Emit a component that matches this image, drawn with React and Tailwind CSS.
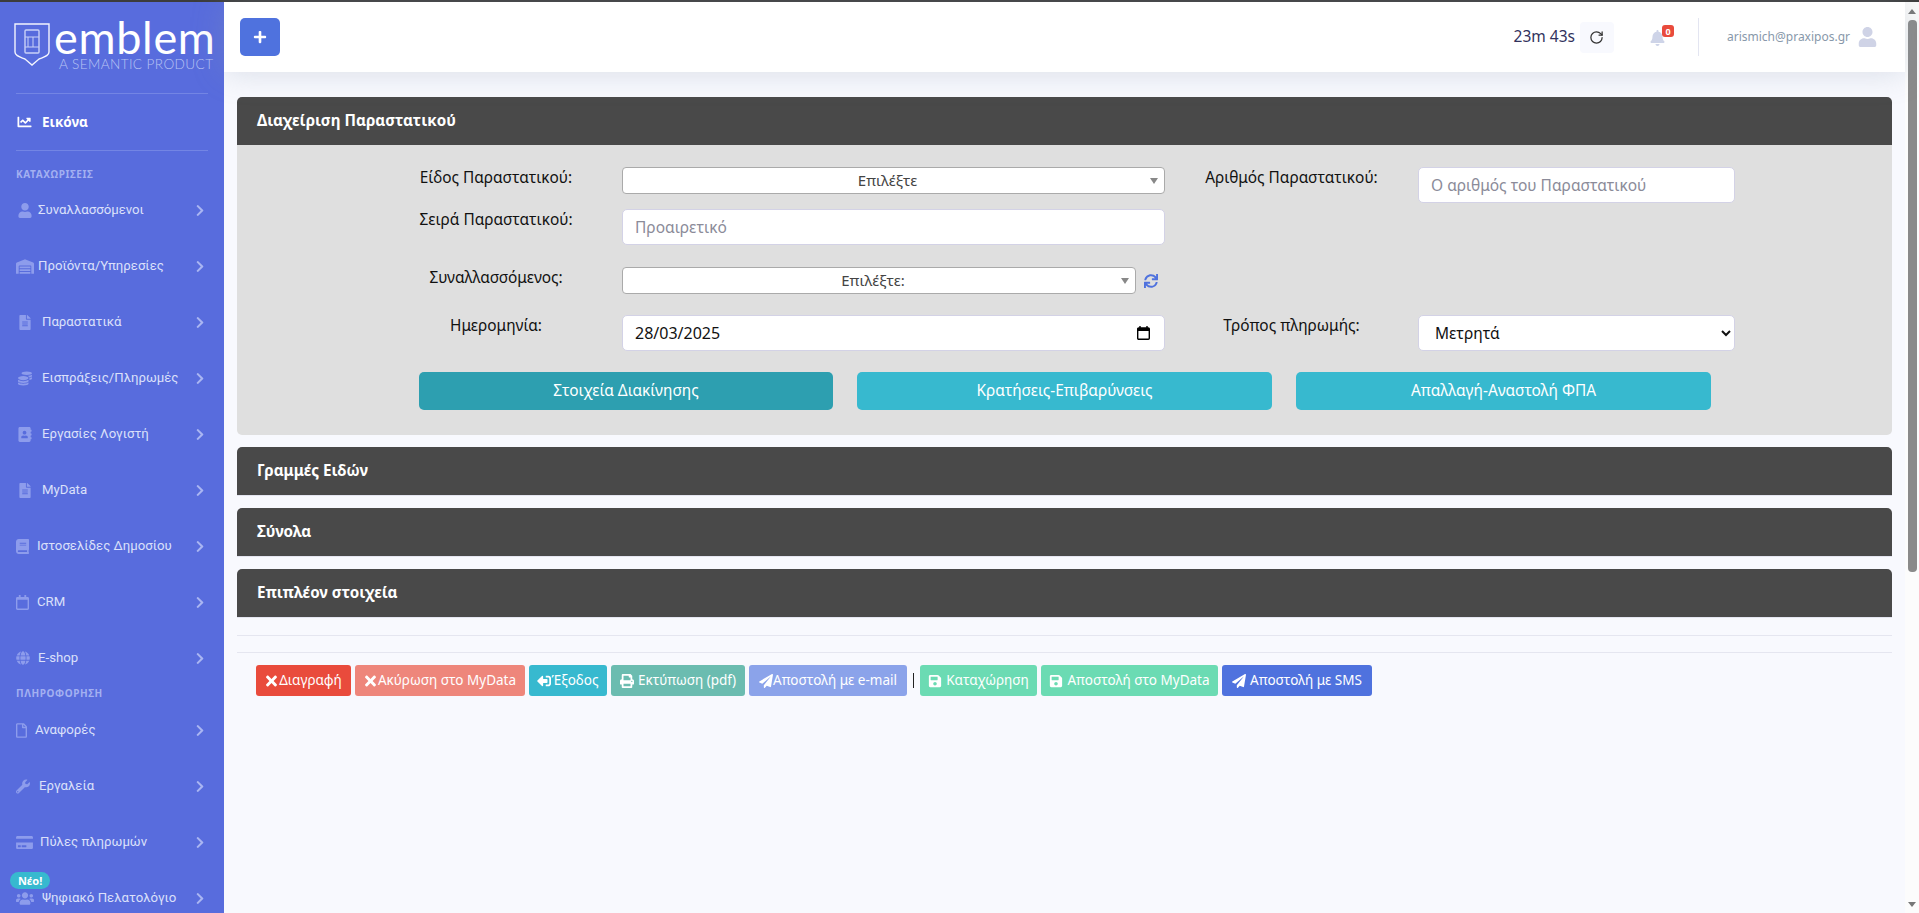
import React from 'react';
import {
  FaAddressBook, FaBell, FaBook, FaChartLine, FaChevronRight, FaCoins, FaCreditCard,
  FaFileAlt, FaGlobe, FaPaperPlane, FaPlus, FaPrint, FaRegCalendar, FaRegFile, FaSave, FaSignOutAlt,
  FaSync, FaTimes, FaUser, FaUsers, FaWarehouse, FaWrench,
} from 'react-icons/fa';
import { RotateCw } from 'lucide-react';

const NAV_TOP = [
  { icon: FaUser, label: 'Συναλλασσόμενοι', gap: 'ml-[18px] mr-[6px] w-[14px] h-[15px]' },
  { icon: FaWarehouse, label: 'Προϊόντα/Υπηρεσίες', gap: 'ml-[16px] mr-[4px] w-[18px] h-[15px]' },
  { icon: FaFileAlt, label: 'Παραστατικά', gap: 'ml-[19px] mr-[11px] w-[12px] h-[15px]' },
  { icon: FaCoins, label: 'Εισπράξεις/Πληρωμές', gap: 'ml-[18px] mr-[10px] w-[14px] h-[15px]' },
  { icon: FaAddressBook, label: 'Εργασίες Λογιστή', gap: 'ml-[18px] mr-[10px] w-[14px] h-[15px]' },
  { icon: FaFileAlt, label: 'MyData', gap: 'ml-[19px] mr-[11px] w-[12px] h-[15px]' },
  { icon: FaBook, label: 'Ιστοσελίδες Δημοσίου', gap: 'ml-[16px] mr-[8px] w-[13px] h-[15px]' },
  { icon: FaRegCalendar, label: 'CRM', gap: 'ml-[16px] mr-[8px] w-[13px] h-[15px]' },
  { icon: FaGlobe, label: 'E-shop', gap: 'ml-[16px] mr-[8px] w-[14px] h-[14px]' },
];

const NAV_INFO = [
  { icon: FaRegFile, label: 'Αναφορές', gap: 'ml-[16px] mr-[8px] w-[11px] h-[15px]' },
  { icon: FaWrench, label: 'Εργαλεία', gap: 'ml-[16px] mr-[9px] w-[14px] h-[15px]' },
  { icon: FaCreditCard, label: 'Πύλες πληρωμών', gap: 'ml-[16px] mr-[7px] w-[17px] h-[15px]' },
  { icon: FaUsers, label: 'Ψηφιακό Πελατολόγιο', gap: 'ml-[16px] mr-[8px] w-[18px] h-[15px]' },
];

const ACTION_BUTTONS = [
  { icon: FaTimes, label: 'Διαγραφή', cls: 'w-[95px] bg-[#e94b3c]', iconCls: 'w-[13px] h-[16px] mr-[1px]' },
  { icon: FaTimes, label: 'Ακύρωση στο MyData', cls: 'w-[170px] bg-[#ee867b]', iconCls: 'w-[13px] h-[16px] mr-[1px]' },
  { icon: FaSignOutAlt, label: 'Έξοδος', cls: 'w-[78px] bg-[#37b9cf]', iconCls: 'w-[14px] h-[14px] -scale-x-100' },
  { icon: FaPrint, label: 'Εκτύπωση (pdf)', cls: 'w-[134px] bg-[#6bbcb0]', iconCls: 'w-[14px] h-[14px] mr-[4px]' },
  { icon: FaPaperPlane, label: 'Αποστολή με e-mail', cls: 'w-[158px] bg-[#8ba3ea]', iconCls: 'w-[14px] h-[14px]' },
];

const SAVE_BUTTONS = [
  { icon: FaSave, label: 'Καταχώρηση', cls: 'w-[117px] bg-[#6bdbb3]' },
  { icon: FaSave, label: 'Αποστολή στο MyData', cls: 'w-[177px] bg-[#6bdbb3]' },
  { icon: FaPaperPlane, label: 'Αποστολή με SMS', cls: 'w-[150px] bg-[#4f72de]' },
];

function NavItem({ item, badge }) {
  const Icon = item.icon;
  return (
    <a className="relative flex h-[56px] items-center font-['Roboto'] text-[13.2px] text-[#dbe0fa]">
      {badge && (
        <span className="absolute left-[10px] top-[2px] z-10 rounded-full bg-[#37b9cf] px-[8px] font-['Noto_Sans'] text-[11px] font-bold leading-[17px] text-white">
          Νέο!
        </span>
      )}
      <Icon className={`${item.gap} shrink-0 text-[#8d9cec]`} />
      <span className="whitespace-nowrap">{item.label}</span>
      <FaChevronRight className="absolute left-[195px] h-[13px] w-[10px] text-[#aab6f2]" />
    </a>
  );
}

function Logo() {
  return (
    <div className="relative h-[61px] pl-[14px] pt-[21px]">
      <svg width="36" height="44" viewBox="0 0 36 44" fill="none" stroke="#f2f4fe" strokeWidth="1.4">
        <path d="M1 1 H35 V29 C35 33 30 34 25 36 L18 42 L11 36 C6 34 1 33 1 29 Z" />
        <rect x="11" y="7" width="14" height="23" rx="1" stroke="#c9d1f7" />
        <path d="M11 14 H25 M14 14 V24 M19 14 V24 M11 24 H25" stroke="#c9d1f7" strokeWidth="1" />
      </svg>
      <span className="absolute left-[54px] top-[16px] font-['Lato'] text-[45px] font-normal leading-[38px] tracking-[0.7px] text-white">
        emblem
      </span>
      <span className="absolute left-[59px] top-[55px] whitespace-nowrap font-['Lato'] text-[13.6px] font-light leading-[14px] tracking-[0.4px] text-[#b9c4f4]">
        A SEMANTIC PRODUCT
      </span>
    </div>
  );
}

function Sidebar() {
  return (
    <aside className="h-full w-[224px] shrink-0 overflow-hidden bg-[#586cdd]">
      <Logo />
      <div className="mx-[16px] mt-[30px] border-t border-[#7385e4]" />
      <a className="flex h-[56px] items-center text-[13.5px] font-bold text-white">
        <FaChartLine className="ml-[17px] mr-[10px] h-[14px] w-[15px]" />
        Εικόνα
      </a>
      <div className="mx-[16px] border-t border-[#7385e4]" />
      <div className="ml-[16px] mt-[16px] h-[14px] text-[10px] font-bold leading-[14px] tracking-[0.6px] text-[#a3b0f1]">
        ΚΑΤΑΧΩΡΙΣΕΙΣ
      </div>
      <div className="mt-[1px]">
        {NAV_TOP.map((item) => <NavItem key={item.label} item={item} />)}
      </div>
      <div className="ml-[16px] h-[14px] text-[10px] font-bold leading-[14px] tracking-[0.6px] text-[#a3b0f1]">
        ΠΛΗΡΟΦΟΡΗΣΗ
      </div>
      <div className="mt-[2px]">
        {NAV_INFO.map((item, i) => <NavItem key={item.label} item={item} badge={i === 3} />)}
      </div>
    </aside>
  );
}

function TopBar() {
  return (
    <header className="relative z-10 flex h-[70px] shrink-0 items-center bg-white pl-[16px] shadow-[0_0_32px_rgba(136,152,170,0.3)]">
      <button className="flex h-[38px] w-[40px] items-center justify-center rounded-[5px] bg-[#4f72de] text-white">
        <FaPlus className="h-[14px] w-[14px]" />
      </button>
      <div className="ml-auto flex items-center">
        <span className="text-[15.5px] text-[#32325d]">23m 43s</span>
        <button className="ml-[5px] flex h-[31px] w-[34px] items-center justify-center rounded-[4px] bg-[#f8f9fe] text-[#333]">
          <RotateCw className="h-[15px] w-[15px]" />
        </button>
        <div className="relative ml-[36px] h-[18px] w-[14px]">
          <FaBell className="h-[16px] w-[15px] translate-y-[2px] text-[#ced4e8]" />
          <span className="absolute left-[12px] top-[-3px] flex h-[12px] w-[12px] items-center justify-center rounded-[3px] bg-[#e94b3c] text-[9px] font-bold leading-none text-white">
            0
          </span>
        </div>
        <div className="ml-[34px] h-[38px] w-px bg-[#e3e5f1]" />
        <span className="ml-[28px] text-[12px] text-[#8898aa]">arismich@praxipos.gr</span>
        <FaUser className="ml-[8px] mr-[28px] h-[20px] w-[19px] text-[#cfd3e6]" />
      </div>
    </header>
  );
}

function Label({ children }) {
  return <label className="text-center text-[15.4px] leading-[22px] text-[#111]">{children}</label>;
}

function FakeSelect({ value, className }) {
  return (
    <div className={`relative flex h-[27px] items-center justify-center rounded-[4px] border border-[#aaa] bg-white pr-[12px] text-[15px] text-[#444] ${className}`}>
      {value}
      <span className="absolute right-[6px] top-[10px] h-0 w-0 border-x-[4px] border-t-[6px] border-x-transparent border-t-[#888]" />
    </div>
  );
}

const inputCls = 'h-[36px] w-full rounded-[5px] border border-[#d3d2e6] bg-white px-[12px] text-[15.5px] text-[#111] outline-none placeholder:text-[#8b8b99]';

function DateField() {
  return (
    <div className="relative">
      <input className={`${inputCls} text-[16px]`} defaultValue="28/03/2025" />
      <svg className="absolute right-[15px] top-[11px]" width="13" height="14" viewBox="0 0 13 14">
        <path d="M3 0 V2 M10 0 V2" stroke="#000" strokeWidth="1.4" />
        <rect x="0.7" y="2" width="11.6" height="11.3" rx="1" fill="#fff" stroke="#000" strokeWidth="1.4" />
        <rect x="0.7" y="2" width="11.6" height="3" fill="#000" />
      </svg>
    </div>
  );
}

function DocumentForm() {
  return (
    <div className="rounded-b-[5px] bg-[#dfdfdf] pb-[25px] pt-[22px]">
      <div className="ml-[133px] grid grid-cols-[252px_543px_253px_317px]">
        <Label>Είδος Παραστατικού:</Label>
        <FakeSelect value="Επιλέξτε" />
        <Label>Αριθμός Παραστατικού:</Label>
        <input className={inputCls} placeholder="Ο αριθμός του Παραστατικού" readOnly />
      </div>
      <div className="ml-[133px] mt-[6px] grid grid-cols-[252px_543px]">
        <Label>Σειρά Παραστατικού:</Label>
        <input className={inputCls} placeholder="Προαιρετικό" readOnly />
      </div>
      <div className="ml-[133px] mt-[22px] grid grid-cols-[252px_543px]">
        <Label>Συναλλασσόμενος:</Label>
        <div className="flex items-center">
          <FakeSelect value="Επιλέξτε:" className="w-[514px]" />
          <FaSync className="ml-[8px] h-[14px] w-[14px] text-[#4f72de]" />
        </div>
      </div>
      <div className="ml-[133px] mt-[21px] grid grid-cols-[252px_543px_253px_317px]">
        <Label>Ημερομηνία:</Label>
        <DateField />
        <Label>Τρόπος πληρωμής:</Label>
        <select className={`${inputCls} appearance-auto`} defaultValue="cash">
          <option value="cash">Μετρητά</option>
        </select>
      </div>
      <div className="ml-[182px] mt-[21px] flex gap-[24px]">
        <button className="h-[38px] w-[414px] rounded-[5px] bg-[#2d9fb0] text-[15.4px] text-white">Στοιχεία Διακίνησης</button>
        <button className="h-[38px] w-[415px] rounded-[5px] bg-[#37b9cf] text-[15.4px] text-white">Κρατήσεις-Επιβαρύνσεις</button>
        <button className="h-[38px] w-[415px] rounded-[5px] bg-[#37b9cf] text-[15.4px] text-white">Απαλλαγή-Αναστολή ΦΠΑ</button>
      </div>
    </div>
  );
}

function PanelHeader({ title }) {
  return (
    <div className="flex h-[48px] items-center rounded-t-[5px] bg-[#494949] pb-[2px] pl-[20px] text-[15.2px] font-bold text-white shadow-[0_1px_0_#e4e5f0]">
      {title}
    </div>
  );
}

function ActionButton({ item }) {
  const Icon = item.icon;
  return (
    <button className={`flex h-[31px] items-center justify-center rounded-[3px] text-[13.5px] text-white ${item.cls}`}>
      <Icon className={item.iconCls || 'mr-[4px] h-[14px] w-[14px]'} />
      {item.label}
    </button>
  );
}

function Scrollbar() {
  return (
    <div className="relative h-full w-[14px] shrink-0 bg-[#fcfcfc]">
      <span className="absolute left-[3px] top-[7px] h-0 w-0 border-x-[4px] border-b-[5px] border-x-transparent border-b-[#777]" />
      <div className="absolute left-[3px] top-[18px] h-[552px] w-[9px] rounded-[4px] bg-[#8a8a8a]" />
      <span className="absolute bottom-[6px] left-[3px] h-0 w-0 border-x-[4px] border-t-[5px] border-x-transparent border-t-[#777]" />
    </div>
  );
}

export default function App() {
  return (
    <div className="flex h-[913px] w-full flex-col overflow-hidden bg-[#f8f9fe] font-['Noto_Sans',sans-serif]">
      <div className="h-[2px] shrink-0 bg-[#3c3c3c]" />
      <div className="flex min-h-0 flex-1">
        <Sidebar />
        <main className="flex min-w-0 flex-1 flex-col">
          <TopBar />
          <div className="px-[13px] pt-[25px]">
            <PanelHeader title="Διαχείριση Παραστατικού" />
            <DocumentForm />
            <div className="mt-[12px]"><PanelHeader title="Γραμμές Ειδών" /></div>
            <div className="mt-[13px]"><PanelHeader title="Σύνολα" /></div>
            <div className="mt-[13px]"><PanelHeader title="Επιπλέον στοιχεία" /></div>
            <div className="mt-[18px] border-t border-[#e5e6f0]" />
            <div className="mt-[16px] border-t border-[#e5e6f0]" />
            <div className="ml-[19px] mt-[12px] flex items-center gap-[4px]">
              {ACTION_BUTTONS.map((item) => <ActionButton key={item.label} item={item} />)}
              <span className="mx-[2px] h-[15px] w-px bg-[#222]" />
              {SAVE_BUTTONS.map((item) => <ActionButton key={item.label} item={item} />)}
            </div>
          </div>
        </main>
        <Scrollbar />
      </div>
    </div>
  );
}
